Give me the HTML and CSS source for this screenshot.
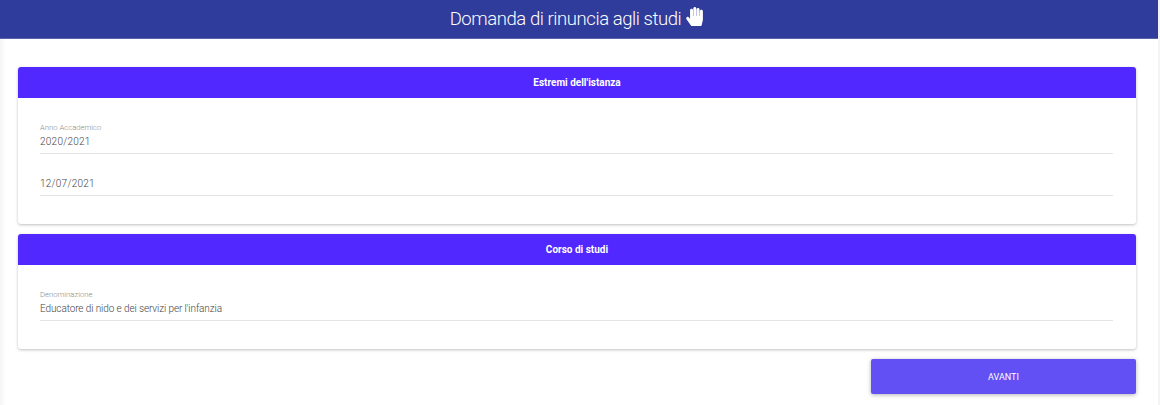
FILE: index.html
```html
<!DOCTYPE html>
<html lang="it">
<head>
    <meta charset="UTF-8">
    <title>Domanda di rinuncia agli studi</title>
    <link rel="stylesheet" href="styles.css">
</head>
<body>
    <header class="topbar">
        <h1>Domanda di rinuncia agli studi</h1>
        <svg class="hand" viewBox="0 0 448 512"><path fill="currentColor" d="M408 76c-22 0-40 18-40 40v124h-8V64c0-22-18-40-40-40s-40 18-40 40v176h-8V40c0-22-18-40-40-40s-40 18-40 40v200h-8V88c0-22-18-40-40-40S104 66 104 88v236l-30-42c-14-18-39-22-57-9-18 14-22 39-9 57l126 174c9 12 24 20 39 20h198c22 0 42-16 47-38l27-114c3-15 5-30 5-45V116c0-22-18-40-40-40z"/></svg>
    </header>

    <main class="content">
        <section class="card">
            <h2 class="card-title">Estremi dell'istanza</h2>
            <div class="card-body">
                <div class="field">
                    <label>Anno Accademico</label>
                    <div class="value date">2020/2021</div>
                </div>
                <div class="field">
                    <label></label>
                    <div class="value date">12/07/2021</div>
                </div>
            </div>
        </section>

        <section class="card">
            <h2 class="card-title">Corso di studi</h2>
            <div class="card-body">
                <div class="field">
                    <label>Denominazione</label>
                    <div class="value">Educatore di nido e dei servizi per l'infanzia</div>
                </div>
            </div>
        </section>

        <div class="actions">
            <button class="next">AVANTI</button>
        </div>
    </main>
</body>
</html>
```

FILE: styles.css
```css
html, body {
    height: 100%;
}

body {
    margin: 0;
    overflow: hidden;
    font-family: 'Roboto', 'Noto Sans', sans-serif;
    background-color: #f4f4f4;
}

.topbar {
    height: 38px;
    margin-right: 2px;
    padding-right: 4px;
    display: flex;
    align-items: center;
    justify-content: center;
    gap: 4px;
    color: #fff;
    background-color: #303c9c;
    border-bottom: 1px solid #5a64ad;
}

.topbar h1 {
    margin: 0;
    font-size: 18.5px;
    font-weight: 300;
    letter-spacing: -0.43px;
    line-height: 38px;
}

.hand {
    width: 19px;
    height: 19px;
    margin-top: -5px;
}

.content {
    height: 338px;
    margin-right: 2px;
    padding: 28px 22px 0 18px;
    background: linear-gradient(to right, #f5f5f5, #fff 6px);
}

.card {
    margin-bottom: 10px;
    border-radius: 3px;
    background-color: #fff;
    box-shadow: 0 1px 3px rgba(0, 0, 0, 0.25);
}

.card-title {
    margin: 0;
    height: 31px;
    line-height: 31px;
    text-align: center;
    font-size: 10px;
    font-weight: 700;
    color: #fff;
    background-color: #5128ff;
    border-radius: 3px 3px 0 0;
}

.card-body {
    padding: 25px 23px 28px 22px;
}

.field {
    height: 30px;
    margin-bottom: 11px;
    border-bottom: 1px solid #e4e4e4;
}

.field:last-child {
    margin-bottom: 0;
}

.field label {
    display: block;
    height: 10px;
    line-height: 10px;
    font-size: 7.7px;
    font-weight: 300;
    color: #8b8b8b;
}

.value {
    height: 18px;
    line-height: 18px;
    font-size: 10px;
    font-weight: 300;
    letter-spacing: -0.1px;
    color: #444;
}

.value.date {
    letter-spacing: 0.25px;
}

.actions {
    display: flex;
    justify-content: flex-end;
}

.next {
    width: 265px;
    height: 35px;
    border: 0;
    border-radius: 2px;
    font-family: inherit;
    font-size: 9px;
    color: #fff;
    background-color: #6250f5;
    box-shadow: 0 1px 4px rgba(0, 0, 0, 0.3);
}
```
